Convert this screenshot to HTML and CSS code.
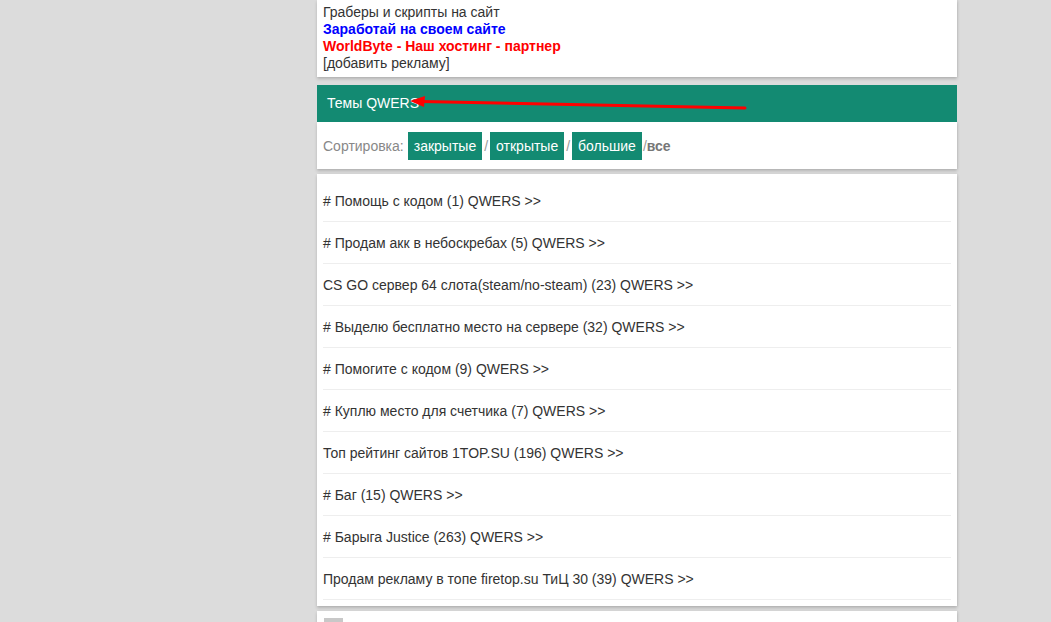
FILE: index.html
```html
<!DOCTYPE html>
<html lang="ru">
<head>
<meta charset="utf-8">
<title>Темы QWERS</title>
<link rel="stylesheet" href="styles.css">
</head>
<body>
<div class="page">
  <div class="block ads">
    <div class="ad ad-gray">Граберы и скрипты на сайт</div>
    <div class="ad ad-blue">Заработай на своем сайте</div>
    <div class="ad ad-red">WorldByte - Наш хостинг - партнер</div>
    <div class="ad ad-gray">[добавить рекламу]</div>
  </div>

  <div class="head">
    Темы QWERS
    <svg class="arrow" width="440" height="30" viewBox="0 0 440 30">
      <line x1="428" y1="23" x2="104" y2="16.5" stroke="#ff0000" stroke-width="3" stroke-linecap="round"/>
      <polygon points="93,16 108,11 107,22" fill="#ff0000"/>
    </svg>
  </div>
  <div class="block sort">
    <span class="sort-label">Сортировка:</span>
    <span class="btn">закрытые</span><span class="sep">/</span><span class="btn">открытые</span><span class="sep">/</span><span class="btn">большие</span><span class="sep sep-last">/</span><span class="all">все</span>
  </div>

  <div class="block list">
    <div class="item"># Помощь с кодом (1) QWERS &gt;&gt;</div>
    <div class="item"># Продам акк в небоскребах (5) QWERS &gt;&gt;</div>
    <div class="item">CS GO сервер 64 слота(steam/no-steam) (23) QWERS &gt;&gt;</div>
    <div class="item"># Выделю бесплатно место на сервере (32) QWERS &gt;&gt;</div>
    <div class="item"># Помогите с кодом (9) QWERS &gt;&gt;</div>
    <div class="item"># Куплю место для счетчика (7) QWERS &gt;&gt;</div>
    <div class="item">Топ рейтинг сайтов 1TOP.SU (196) QWERS &gt;&gt;</div>
    <div class="item"># Баг (15) QWERS &gt;&gt;</div>
    <div class="item"># Барыга Justice (263) QWERS &gt;&gt;</div>
    <div class="item">Продам рекламу в топе firetop.su ТиЦ 30 (39) QWERS &gt;&gt;</div>
  </div>

  <div class="block footer">
    <span class="square"></span>
  </div>
</div>
</body>
</html>
```

FILE: styles.css
```css
html, body {
  margin: 0;
  padding: 0;
  background: #dcdcdc;
  font-family: "Liberation Sans", Arial, sans-serif;
  font-size: 14px;
  color: #333333;
  overflow: hidden;
}

.page {
  width: 640px;
  margin-left: 317px;
  display: flex;
  flex-direction: column;
}

.block {
  background: #ffffff;
  box-shadow: 0 2px 3px rgba(0, 0, 0, 0.18), 1px 0 2px rgba(0, 0, 0, 0.06);
}

.ads {
  padding: 4px 6px 5px;
  line-height: 17px;
}

.ad-gray { color: #333333; }
.ad-blue { color: #0000ff; font-weight: bold; }
.ad-red { color: #ff0000; font-weight: bold; }

.head {
  position: relative;
  margin-top: 8px;
  height: 37px;
  line-height: 37px;
  padding-left: 10px;
  background: #138a72;
  color: #ffffff;
}

.arrow {
  position: absolute;
  left: 0;
  top: 0;
}

.sort {
  height: 47px;
  padding: 0 6px;
  display: flex;
  align-items: center;
  color: #888888;
}

.sort-label {
  margin-right: 4px;
}

.btn {
  display: inline-block;
  height: 28px;
  line-height: 28px;
  padding: 0 6px;
  background: #138a72;
  color: #ffffff;
}

.sep {
  margin: 0 2px;
  color: #999999;
}

.sep-last {
  margin: 0 0 0 1px;
}

.all {
  font-weight: bold;
  color: #777777;
}

.list {
  margin-top: 5px;
  padding: 6px 6px 6px;
}

.item {
  height: 40px;
  padding-top: 1px;
  line-height: 40px;
  border-bottom: 1px solid #eeeeee;
  color: #333333;
}

.footer {
  margin-top: 5px;
  height: 40px;
  padding: 7px 7px 0;
}

.square {
  display: block;
  width: 19px;
  height: 19px;
  background: #c8c8c8;
}
```
